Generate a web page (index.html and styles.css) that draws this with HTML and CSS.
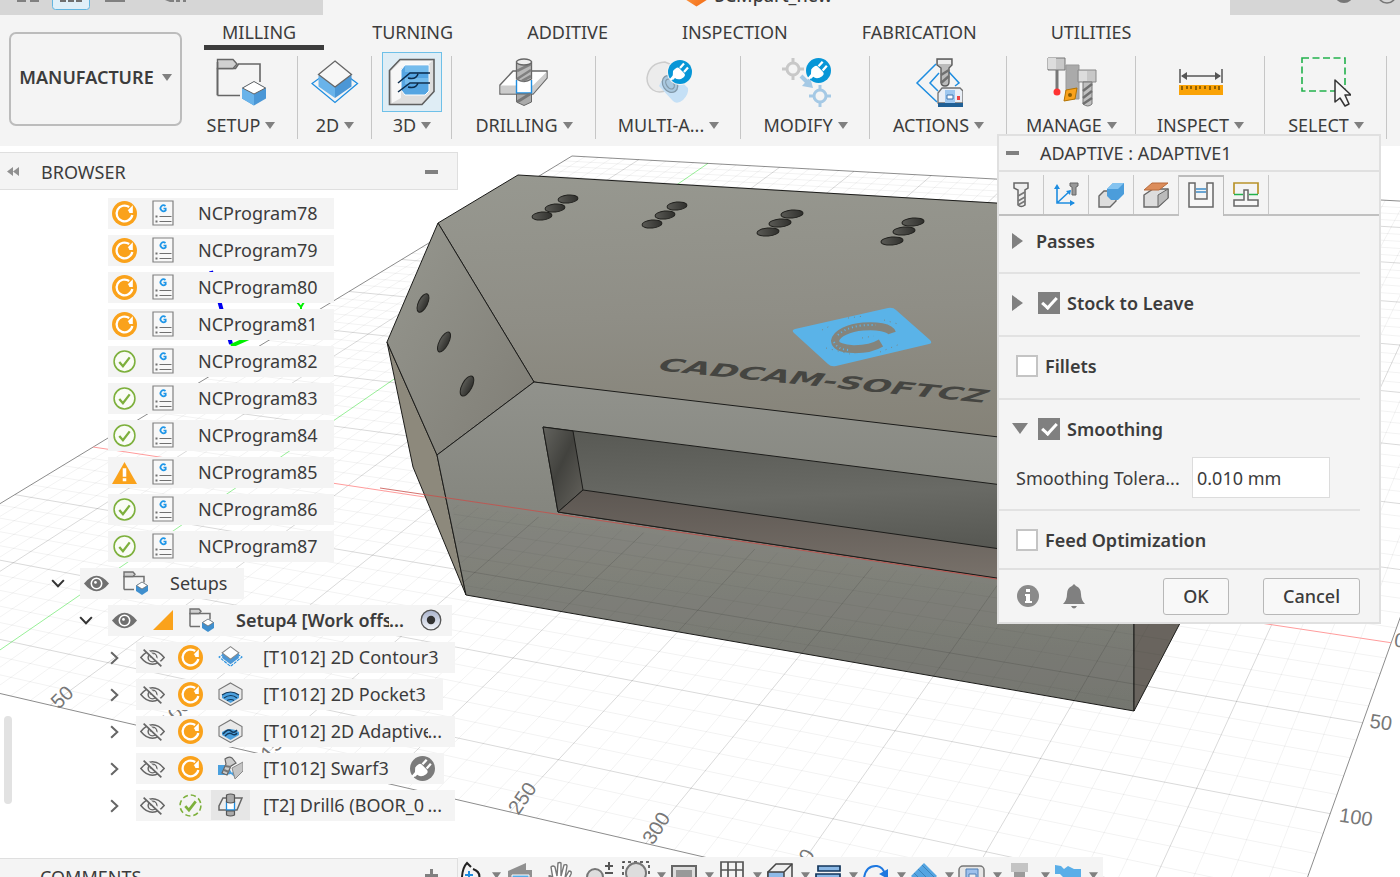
FILE: index.html
```html
<!DOCTYPE html>
<html lang="en">
<head>
<meta charset="utf-8">
<title>SCMpart_new</title>
<link rel="stylesheet" href="styles.css">
</head>
<body>
<svg class="defs" aria-hidden="true">
  <defs>
    <linearGradient id="g-top" x1="0" y1="0" x2="0.12" y2="1"><stop offset="0" stop-color="#979890"/><stop offset=".5" stop-color="#8f8e86"/><stop offset="1" stop-color="#848176"/></linearGradient>
    <linearGradient id="g-front" x1="0" y1="0" x2="0" y2="1"><stop offset="0" stop-color="#91928c"/><stop offset=".35" stop-color="#868780"/><stop offset="1" stop-color="#757670"/></linearGradient>
    <linearGradient id="g-chamfer" x1="0" y1="0" x2="1" y2="1"><stop offset="0" stop-color="#96978f"/><stop offset="1" stop-color="#7f7d75"/></linearGradient>
    <linearGradient id="g-wall" x1="0" y1="0" x2="1" y2="1"><stop offset="0" stop-color="#63635e"/><stop offset=".45" stop-color="#42423e"/><stop offset="1" stop-color="#66645e"/></linearGradient>
    <linearGradient id="g-pocket" x1="0" y1="0" x2=".15" y2="1"><stop offset="0" stop-color="#575853"/><stop offset=".5" stop-color="#696a65"/><stop offset="1" stop-color="#50514c"/></linearGradient>
    <linearGradient id="g-floor" x1="0" y1="0" x2=".1" y2="1"><stop offset="0" stop-color="#5d5752"/><stop offset="1" stop-color="#78716a"/></linearGradient>
    <linearGradient id="g-hole" x1="0" y1="0" x2="1" y2="0"><stop offset="0" stop-color="#5b5b56"/><stop offset="1" stop-color="#30302d"/></linearGradient>
    <linearGradient id="g-radio" x1="0" y1="0" x2="0" y2="1"><stop offset="0" stop-color="#a9b3cc"/><stop offset="1" stop-color="#f4f6fa"/></linearGradient>
    <linearGradient id="g-orange" x1="0" y1="0" x2="1" y2="1"><stop offset="0" stop-color="#ffa24d"/><stop offset="1" stop-color="#f26a13"/></linearGradient>
  </defs>
  <symbol id="i-caret" viewBox="0 0 10 7"><path d="M0 0h10L5 7z" fill="#808080"/></symbol>
  <symbol id="i-minus" viewBox="0 0 13 4"><path d="M0 0h13v4H0z" fill="#808080"/></symbol>
  <symbol id="i-plug" viewBox="0 0 24 24"><circle cx="12" cy="12" r="12" fill="currentColor"/><path d="M5 11q4-5 6-3l5 5q3 3-3 6-4 1-6-1l-2.500 2.500" fill="#fff"/><path d="M12 8l4-4.500M16 12l4-4.500" stroke="#fff" stroke-width="2.200"/><path d="M6 16l-3.500 4" stroke="#fff" stroke-width="2.500"/></symbol>
  <symbol id="i-refresh" viewBox="0 0 24 24"><circle cx="12" cy="12" r="12" fill="#faa21b"/><path d="M16.500 5.800A7.600 7.600 0 1 0 19.500 13.500" fill="none" stroke="#fff" stroke-width="2.200"/><path d="M20 4v7.500h-7.500z" fill="#fff"/><circle cx="12" cy="12.500" r="4.800" fill="#faa21b"/></symbol>
  <symbol id="i-ok" viewBox="0 0 24 24"><circle cx="12" cy="12" r="10" fill="#fafcf6" stroke="#7db03c" stroke-width="1.500"/><path d="M7 12.500l3.500 4L17 8" fill="none" stroke="#7db03c" stroke-width="2.200"/></symbol>
  <symbol id="i-okdash" viewBox="0 0 24 24"><circle cx="12" cy="12" r="10" fill="none" stroke="#7db03c" stroke-width="1.500" stroke-dasharray="5 2.850"/><path d="M7 12.500l3.500 4L17 8" fill="none" stroke="#7db03c" stroke-width="2.600"/></symbol>
  <symbol id="i-warn" viewBox="0 0 24 24"><path d="M12 2l12 21H0z" fill="#faa21b"/><path d="M10.300 8h3.400v8h-3.400zM10.300 17.500h3.400v3h-3.400z" fill="#fff"/></symbol>
  <symbol id="i-nc" viewBox="0 0 22 26"><path d="M1 1h20v24H1z" fill="#f8f8f8" stroke="#808080" stroke-width="1.200"/><path d="M13.500 6a3 3 0 1 0 .2 4.300V8.500h-2.200" fill="none" stroke="#1e96e8" stroke-width="1.700"/><path d="M7.500 16.500h12M7.500 21.500h12" stroke="#707070" stroke-width="1.200"/><path d="M3.500 15.500h2v2h-2zM3.500 20.500h2v2h-2z" fill="#707070"/></symbol>
  <symbol id="i-eye" viewBox="0 0 24 24"><path d="M0 12Q6 4.500 12 4.500T24 12Q18 19.500 12 19.500T0 12z" fill="#707070"/><circle cx="12" cy="12" r="5" fill="#707070" stroke="#fff" stroke-width="1.500"/><circle cx="11" cy="11" r="1.300" fill="#fff"/></symbol>
  <symbol id="i-eyeoff" viewBox="0 0 24 24"><g fill="none" stroke="#666" stroke-width="1.400"><path d="M.8 12Q6 5.500 12 5.500T23.200 12Q18 18.500 12 18.500T.8 12z"/><circle cx="12" cy="12" r="4.200"/><path d="M10 12a2 2 0 0 1 3-2"/><path d="M4.500 3.500l17 16" stroke="#f4f4f4" stroke-width="3"/><path d="M3.500 4.500l17 16" stroke-width="1.700"/></g></symbol>
  <symbol id="i-down" viewBox="0 0 12 8"><path d="M.8 1L6 6.500 11.200 1" fill="none" stroke="#333" stroke-width="1.800"/></symbol>
  <symbol id="i-right" viewBox="0 0 8 12"><path d="M1 .8L6.500 6 1 11.200" fill="none" stroke="#666" stroke-width="1.800"/></symbol>
  <symbol id="i-folder" viewBox="0 0 50 48"><path d="M1.500 37.500V10.500h18l3-4.500h21.500v18M24 37.500H1.500" fill="none" stroke="#666" stroke-width="1.600"/><path d="M1.500 1.500H17l4 4.500-4 4.500H1.500z" fill="#d0d0d0" stroke="#666" stroke-width="1.400"/><path d="M1.500 4v33" stroke="#666" stroke-width="1.600"/><path d="M38 23.500l12 6.500v10.500L38 47.500l-12-7V30z" fill="#4b97d6"/><path d="M26 30v10.500l12 7V36.500z" fill="#69b3ea"/><path d="M38 23.500l11.500 6.500L38 36 26.500 30z" fill="#fff" stroke="#666"/></symbol>
  <symbol id="i-folder-sm" viewBox="0 0 25 24"><path d="M1 18.500V5.500h20v6M11 18.500H1" fill="none" stroke="#707070" stroke-width="1.500"/><path d="M1 1h9l2 2.300-2 2.200H1z" fill="#d0d0d0" stroke="#707070" stroke-width="1.400"/><path d="M19 11l6 3.500v5.500l-6 4-6-4v-5.500z" fill="#3f8fce"/><path d="M19 11l5.500 3.500L19 18l-5.500-3.500z" fill="#fff" stroke="#707070" stroke-width=".8"/></symbol>
  <symbol id="i-2d" viewBox="0 0 48 44"><path d="M24 7L46.500 23.500 24 42.500 1 23.500z" fill="none" stroke="#1e8de0" stroke-width="1.300"/><path d="M7.500 15v11.500L24 38V26z" fill="#69b3ea"/><path d="M40.500 15v11.500L24 38V26z" fill="#4b97d6"/><path d="M24 1l16.500 13.500L24 27 7.500 14.500z" fill="#f7f7f7" stroke="#666" stroke-width="1.300"/></symbol>
  <symbol id="i-3d" viewBox="0 0 48 48"><path d="M12 1.500h34v32L34 46.500H1.500V12.500z" fill="#ddd" stroke="#5f5f5f" stroke-width="1.600"/><path d="M3 13L13 3h31l-7 7H13v30L4 45z" fill="#f7f7f7"/><path d="M17 7h24v26l-4 4H17l-4-5V12z" fill="#55a5e2" stroke="#fff"/><path d="M17 8h23v6H17zM17 20h23v6H17z" fill="#75bced"/><g fill="none" stroke="#0c2c4c" stroke-width="1.500"><path d="M42 15H22L10 25M42 25H22L10 34M20 20q8 2 10-4M20 29q8 2 10-4"/></g></symbol>
  <symbol id="i-drill" viewBox="0 0 50 48"><path d="M14 13h34v7L34 36H1V27z" fill="#fff" stroke="#6a6a6a" stroke-width="1.500"/><path d="M1.500 27.500H34L47.500 14v6L34 35.500H1.500z" fill="#ccc"/><path d="M17.500 22v13h15V22" fill="#fff" stroke="#1e8de0" stroke-width="1.400"/><path d="M17.500 36h15v8L25 47.500 17.500 44z" fill="#aaa" stroke="#666"/><path d="M18 44l13-8" stroke="#777" stroke-width="3"/><path d="M17.500 4v17q7.500 5 15 0V4z" fill="#b8b8b8" stroke="#666" stroke-width="1.300"/><path d="M18 13L32 6M18 21l14-9M23 23l9-5" stroke="#808080" stroke-width="2.600"/><ellipse cx="25" cy="4" rx="7.500" ry="3" fill="#eee" stroke="#666" stroke-width="1.300"/></symbol>
  <symbol id="i-multi" viewBox="0 0 48 48"><path d="M2 20Q4 5 20 4l12 5L22 32Q14 36 8 32 2 28 2 20z" fill="#ececec" stroke="#ccc" stroke-width="1.500"/><path d="M14 28L28 43Q32 47 38 42 44 36 43 30L28 16Q18 17 14 28z" fill="#c5e0f6"/><ellipse cx="25" cy="26" rx="7" ry="9" transform="rotate(-35 25 26)" fill="#a9c8df" stroke="#8299aa" stroke-width="1.300"/><ellipse cx="25" cy="26" rx="3.500" ry="5.500" transform="rotate(-35 25 26)" fill="none" stroke="#8299aa" stroke-width="1.300"/><circle cx="35" cy="14" r="13" fill="#f4f4f4"/><use href="#i-plug" x="23" y="2" width="24" height="24" color="#0696d7"/></symbol>
  <symbol id="i-modify" viewBox="0 0 50 50"><g fill="none" stroke-width="3"><path d="M12 1v6M12 17v6M1 12h6M17 12h6" stroke="#c8c8c8"/><circle cx="12" cy="12" r="6" stroke="#c8c8c8"/><path d="M39 28v6M39 44v6M28 39h6M44 39h6" stroke="#a5c9e5"/><circle cx="39" cy="39" r="6" stroke="#a5c9e5"/><path d="M20 19l9 9" stroke="#a5c9e5" stroke-width="4"/></g><path d="M32 31l-11-2 8-9z" fill="#a5c9e5"/><use href="#i-plug" x="25" y="1" width="25" height="25" color="#0696d7"/></symbol>
  <symbol id="i-actions" viewBox="0 0 48 50"><path d="M21 7L2 26l20 19M24 16L15 26l8 8M34 15l10 11-4 3" fill="none" stroke="#1e8de0" stroke-width="1.500"/><path d="M22 2h15v6l-3 3v14q0 4-4 4t-4-4V11l-4-3z" fill="#bbb" stroke="#5c5c5c" stroke-width="1.400"/><path d="M23 3h13v4H23z" fill="#eee"/><path d="M26 18l8-5M26 26l8-7" stroke="#707070" stroke-width="2.500"/><path d="M23 36l4-5h18l3 3v12H23z" fill="#e8eef6" stroke="#707070" stroke-width="1.300"/><path d="M30 33h10v13H30z" fill="#9ec7ef"/><path d="M32 38h6v4h-6z" fill="#fff" stroke="#3f75ad"/><path d="M42 39h3v4h-3z" fill="#e44"/><path d="M23 46h25v4H23z" fill="#1f5f95"/></symbol>
  <symbol id="i-manage" viewBox="0 0 50 50"><path d="M19 8h13v34H19z" fill="#aaa" stroke="#999"/><path d="M1 1h17v12H1z" fill="#c8c8c8" stroke="#777"/><path d="M1 1h8v11H1z" fill="#ddd"/><path d="M10 13v19" stroke="#777" stroke-width="3"/><circle cx="10" cy="35" r="3.500" fill="#f33"/><path d="M19 33l11-2-2 11-11 2z" fill="#faa21b" stroke="#b37300"/><circle cx="23" cy="38" r="2" fill="#8a5c00"/><path d="M31 13h18v12H31z" fill="#c8c8c8" stroke="#888"/><path d="M32 14h8v10h-8z" fill="#ddd"/><path d="M36 25h9v22q-4 4-9 0z" fill="#c0c0c0" stroke="#777"/><path d="M36 34l9-7M36 41l9-7M36 47l9-6" stroke="#707070" stroke-width="2.500"/></symbol>
  <symbol id="i-inspect" viewBox="0 0 44 26"><path d="M1 0v14M43 0v14M3 7h38" stroke="#555" stroke-width="1.500"/><path d="M2 7l6-4v8zM42 7l-6-4v8z" fill="#555"/><path d="M0 16h44v10H0z" fill="#faa307"/><path d="M3 17v4M8 17v3M12 17v3M17 17v4M21 17v3M26 17v3M31 17v4M36 17v3M40 17v4" stroke="#5c3f00" stroke-width="1.300"/></symbol>
  <symbol id="i-select" viewBox="0 0 50 50"><path d="M1 1h43v33H1z" fill="none" stroke="#22b14c" stroke-width="1.600" stroke-dasharray="7 3.500"/><path d="M34 23v22l5-4 5 8 4-2-4-9h6z" fill="#f7f7f7" stroke="#333" stroke-width="1.500" stroke-linejoin="round"/></symbol>
  <symbol id="i-part" viewBox="0 0 24 24"><path d="M12 0l11 6v11l-11 7-11-7V6z" fill="url(#g-orange)"/></symbol>
  <symbol id="d-tool" viewBox="0 0 26 26"><path d="M6 1h14v5l-3 2v15q-4 3-7 0V8L6 6z" fill="#eee" stroke="#666" stroke-width="1.500"/><path d="M10 14l7-4M10 19l7-4M10 23l7-4" stroke="#777" stroke-width="1.700"/></symbol>
  <symbol id="d-geom" viewBox="0 0 26 26"><path d="M4 5v16h17M4 21L17 9" fill="none" stroke="#1e8de0" stroke-width="1.600"/><path d="M4 2L1 7h6zM22 21l-5-3v6zM18 8l-5 1 4 4z" fill="#1e8de0"/><path d="M17 1h8v3l-2 1v8h-4V5l-2-1z" fill="#999" stroke="#666"/></symbol>
  <symbol id="d-stock" viewBox="0 0 26 26"><path d="M1 14l5-5h12v10l-6 6H1z" fill="#ddd" stroke="#666" stroke-width="1.400"/><path d="M9 7l6-6h11v11l-6 6h-7l-4-4z" fill="#4b9ddb"/><path d="M9 7l6-6h11l-6 6z" fill="#84c3f0"/></symbol>
  <symbol id="d-heights" viewBox="0 0 26 26"><path d="M1 13l9-6h15v9l-10 9H1z" fill="#ddd" stroke="#666" stroke-width="1.400"/><path d="M15 13v12L25 16V7z" fill="#bbb" stroke="#666"/><path d="M1 8l8-7h16l-9 7z" fill="#dc8d5b" stroke="#b86b3c"/></symbol>
  <symbol id="d-pass" viewBox="0 0 26 26"><path d="M1 1h6v16h12V1h6v24H1z" fill="#f8f8f8" stroke="#666" stroke-width="1.500"/><path d="M8 7h10M8 10h10" stroke="#3b8bc8" stroke-width="1.400"/></symbol>
  <symbol id="d-link" viewBox="0 0 26 26"><path d="M1 12V1h24v11" fill="none" stroke="#b8932b" stroke-width="1.700"/><path d="M1 12.500h9M16 12.500h9" stroke="#22b14c" stroke-width="1.600"/><path d="M11 8h4v10h10v6H1v-6h10z" fill="#f8f8f8" stroke="#666" stroke-width="1.500"/></symbol>
  <symbol id="i-info" viewBox="0 0 22 22"><circle cx="11" cy="11" r="11" fill="#8a8a8a"/><path d="M9 4h4v3H9zM8 9h5v7h2v2H8v-2h1v-5H8z" fill="#fff"/></symbol>
  <symbol id="i-bell" viewBox="0 0 22 25"><path d="M11 0l2 2q5 2 5 8 0 6 4 10H0q4-4 4-10 0-6 5-8zM8 22h6q-3 5-6 0z" fill="#808080"/></symbol>
  <symbol id="s-contour" viewBox="0 0 24 22"><path d="M12 4l11 7-11 9L1 11z" fill="none" stroke="#1e8de0" stroke-dasharray="3 1"/><path d="M4 7v5l8 6 8-6V7l-8 6z" fill="#4b97d6"/><path d="M12 1l8 6-8 6-8-6z" fill="#fff" stroke="#888"/></symbol>
  <symbol id="s-pocket" viewBox="0 0 25 24"><path d="M12.500 1L24 7.500V17l-11.500 6.500L1 17V7.500z" fill="#e9e9e9" stroke="#777" stroke-width="1.100"/><path d="M4 13q8-6 17 0v3l-8.500 5L4 16z" fill="#4ba0de"/><path d="M4 13q8.500-6 17 0M6 16q7-5 13 0M9 18.500q4-2 7 0" fill="none" stroke="#133a5c" stroke-width="1.200"/></symbol>
  <symbol id="s-adaptive" viewBox="0 0 25 24"><path d="M12.500 1L24 7.500V17l-11.500 6.500L1 17V7.500z" fill="#e9e9e9" stroke="#777" stroke-width="1.100"/><path d="M4 13q8-6 17 0v3l-8.500 5L4 16z" fill="#4ba0de"/><path d="M5 15q5-6 8-3t6-1M7 17q4-4 7-2t5-1" fill="none" stroke="#133a5c" stroke-width="1.500"/></symbol>
  <symbol id="s-swarf" viewBox="0 0 25 24"><path d="M0 9h9l5 8 4-6v11l-5-4-5 1H0z" fill="#4ba0de"/><path d="M14 12l11-6v9l-8 8z" fill="#c4c4c4" stroke="#888"/><path d="M7 3q4-3 7-1l4 5-5 3-4 9-5-2 4-9z" fill="#ccc" stroke="#666" stroke-width="1.200"/><path d="M7 10l6 1M6 14l5 2" stroke="#777" stroke-width="2"/></symbol>
  <symbol id="s-drill" viewBox="0 0 25 24"><path d="M5 5h19l-5 12H1v-4z" fill="#eee" stroke="#666" stroke-width="1.500"/><path d="M8.500 8v9h8V8" fill="#fff" stroke="#1e8de0" stroke-width="1.300"/><path d="M8.500 2q4-2 8 0v7q-4 2-8 0zM8.500 18h8v4q-4 2-8 0z" fill="#aaa" stroke="#555" stroke-width="1.200"/></symbol>
</svg>

<div class="app">
  <header class="titlebar">
    <div class="quick">
      <svg class="tiny" viewBox="0 0 200 15"><path d="M17 0h9v2h-9zM30 0h9v2h-9zM105 0h20v2h-20zM170 0h4v2h-4zM176 0h4v2h-4zM183 0h3v2h-3zM165 0l5 2v-2z" fill="#808080"/><rect x="52.500" y="-9" width="37" height="18.500" rx="3" fill="#e0eff8" stroke="#62b5e0"/><path d="M60 0h6v2h-6zM68 0h6v2h-6zM76 0h6v2h-6z" fill="#707070"/></svg>
    </div>
    <div class="doc"><svg width="24" height="24"><use href="#i-part"/></svg><span>SCMpart_new</span></div>
    <div class="right"><svg viewBox="0 0 170 15" width="170" height="15"><ellipse cx="114" cy="-5" rx="9" ry="8" fill="#777"/><circle cx="157" cy="-6" r="9" fill="none" stroke="#777" stroke-width="1.500"/></svg></div>
  </header>

  <section class="ribbon">
    <button class="workspace" type="button">MANUFACTURE <svg class="caret"><use href="#i-caret"/></svg></button>
    <div class="ribbon-main">
      <nav class="tabs">
        <a class="tab on" href="#">MILLING</a><a class="tab" href="#">TURNING</a><a class="tab" href="#">ADDITIVE</a><a class="tab" href="#">INSPECTION</a><a class="tab" href="#">FABRICATION</a><a class="tab" href="#">UTILITIES</a>
      </nav>
      <div class="groups">
        <button class="group" type="button"><span class="ico"><svg width="50" height="48"><use href="#i-folder"/></svg></span><span class="lab">SETUP <svg class="caret"><use href="#i-caret"/></svg></span></button>
        <button class="group" type="button"><span class="ico"><svg width="48" height="44"><use href="#i-2d"/></svg></span><span class="lab">2D <svg class="caret"><use href="#i-caret"/></svg></span></button>
        <button class="group" type="button"><span class="ico hot"><svg width="48" height="48"><use href="#i-3d"/></svg></span><span class="lab">3D <svg class="caret"><use href="#i-caret"/></svg></span></button>
        <button class="group" type="button"><span class="ico"><svg width="50" height="48"><use href="#i-drill"/></svg></span><span class="lab">DRILLING <svg class="caret"><use href="#i-caret"/></svg></span></button>
        <button class="group" type="button"><span class="ico"><svg width="48" height="48"><use href="#i-multi"/></svg></span><span class="lab">MULTI-A... <svg class="caret"><use href="#i-caret"/></svg></span></button>
        <button class="group" type="button"><span class="ico"><svg width="50" height="50"><use href="#i-modify"/></svg></span><span class="lab">MODIFY <svg class="caret"><use href="#i-caret"/></svg></span></button>
        <button class="group" type="button"><span class="ico"><svg width="48" height="50"><use href="#i-actions"/></svg></span><span class="lab">ACTIONS <svg class="caret"><use href="#i-caret"/></svg></span></button>
        <button class="group" type="button"><span class="ico"><svg width="50" height="50"><use href="#i-manage"/></svg></span><span class="lab">MANAGE <svg class="caret"><use href="#i-caret"/></svg></span></button>
        <button class="group" type="button"><span class="ico"><svg width="44" height="26"><use href="#i-inspect"/></svg></span><span class="lab">INSPECT <svg class="caret"><use href="#i-caret"/></svg></span></button>
        <button class="group" type="button"><span class="ico"><svg width="50" height="50"><use href="#i-select"/></svg></span><span class="lab">SELECT <svg class="caret"><use href="#i-caret"/></svg></span></button>
      </div>
    </div>
  </section>

  <main class="stage">
    <svg class="canvas" viewBox="0 146 1400 731" preserveAspectRatio="xMidYMid slice">
      <defs>
        <clipPath id="under-axis"><path d="M452 504L1182 613 1134 711 466 595z"/></clipPath>
      </defs>
      <g id="ground"></g>
      <g class="axis-labels">
        <text transform="translate(1381 722) rotate(8)" y="7">50</text>
        <text transform="translate(1356 817) rotate(8)" y="7">100</text>
        <text transform="translate(1400 640) rotate(8)" y="7">0</text>
        <text transform="translate(62 697) rotate(-44)" y="7">50</text>
        <text transform="translate(175 713) rotate(-46)" y="7">100</text>
        <text transform="translate(275 744) rotate(-50)" y="7">150</text>
        <text transform="translate(522 798) rotate(-55)" y="7">250</text>
        <text transform="translate(656 828) rotate(-58)" y="7">300</text>
        <text transform="translate(801 865) rotate(-60)" y="7">350</text>
      </g>
      <path d="M211 271l20 73" stroke="#0000f0" stroke-width="4"/>
      <path d="M231 346l29-13" stroke="#00f000" stroke-width="4"/>
      <path d="M297 302l4 5 3-5M301 307v4" stroke="#00f000" stroke-width="2" fill="none"/>

      <g stroke="#1c1c1a" stroke-width="1" stroke-linejoin="round">
        <path d="M387 342L437 455 466 595 413 467z" fill="#8d897c"/>
        <path d="M518 175L1200 215 1330 400 1182 470 534 382 438 223z" fill="url(#g-top)"/>
        <path d="M438 223L534 382 437 455 387 342z" fill="url(#g-chamfer)"/>
        <path d="M534 382L1134 453V711L466 595 437 455z" fill="url(#g-front)"/>
        <path d="M1134 453L1243 380V503L1134 711z" fill="#69655e"/>
        <path d="M543 427L1050 491V586L558 512z" fill="url(#g-pocket)"/>
        <path d="M543 427L573 431 583 490 558 512z" fill="url(#g-wall)"/>
        <path d="M583 490L1050 556V586L558 512z" fill="url(#g-floor)"/>
      </g>
      <use href="#ground" clip-path="url(#under-axis)" opacity=".8"/>
      <path d="M380 488L1010 581" stroke="#c94f4a" stroke-width="1" opacity=".8"/>

      <g fill="url(#g-hole)" stroke="#22221f" stroke-width="1">
        <ellipse cx="568" cy="199" rx="10" ry="4" transform="rotate(-6 568 199)"/><ellipse cx="555" cy="208" rx="10" ry="4" transform="rotate(-6 555 208)"/><ellipse cx="542" cy="216" rx="10" ry="4" transform="rotate(-6 542 216)"/>
        <ellipse cx="677" cy="206" rx="10" ry="4" transform="rotate(-6 677 206)"/><ellipse cx="665" cy="215" rx="10" ry="4" transform="rotate(-6 665 215)"/><ellipse cx="652" cy="224" rx="10" ry="4" transform="rotate(-6 652 224)"/>
        <ellipse cx="792" cy="214" rx="11" ry="4" transform="rotate(-5 792 214)"/><ellipse cx="780" cy="223" rx="11" ry="4" transform="rotate(-5 780 223)"/><ellipse cx="768" cy="232" rx="11" ry="4" transform="rotate(-5 768 232)"/>
        <ellipse cx="913" cy="222" rx="11" ry="4" transform="rotate(-5 913 222)"/><ellipse cx="904" cy="231" rx="11" ry="4" transform="rotate(-5 904 231)"/><ellipse cx="892" cy="241" rx="11" ry="4" transform="rotate(-5 892 241)"/>
        <ellipse cx="423" cy="303" rx="4.500" ry="10" transform="rotate(26 423 303)"/><ellipse cx="444" cy="342" rx="4.500" ry="11" transform="rotate(28 444 342)"/><ellipse cx="467" cy="386" rx="5" ry="11" transform="rotate(28 467 386)"/>
      </g>
      <path d="M795 329L888 308Q893 307 896 310L930 340Q933 343 929 344L836 366Q831 367 828 364L794 333Q791 330 795 329z" fill="#5ab3e8"/>
      <path d="M892 333C888 322 838 324 835 341C836 352 868 351 881 343" fill="none" stroke="#84847c" stroke-width="8"/>
      <path d="M838 335Q850 324 876 325M834 342Q838 350 850 350" fill="none" stroke="#5ab3e8" stroke-width="2" stroke-dasharray="1 3"/>
      <path d="M826 348l24 6M822 330l8-4M880 352l20-8M884 320l14 4M848 318l16-2M862 338l12-2" fill="none" stroke="#7b8583" stroke-width="1" stroke-dasharray="1 5"/>
      <text class="engraved" transform="matrix(1 .1 -.38 .5 655 370)">CADCAM-SOFTCZ</text>
    </svg>

    <aside class="left">
      <div class="panel-head"><svg width="12" height="9" viewBox="0 0 12 9"><path d="M6 0v9L0 4.500zM12 0v9L6 4.500z" fill="#909090"/></svg><span>BROWSER</span><svg class="end" width="13" height="4"><use href="#i-minus"/></svg></div>
      <ul class="tree">
        <li class="row nc"><div class="cell"><svg class="st"><use href="#i-refresh"/></svg><svg class="pg"><use href="#i-nc"/></svg><span>NCProgram78</span></div></li>
        <li class="row nc"><div class="cell"><svg class="st"><use href="#i-refresh"/></svg><svg class="pg"><use href="#i-nc"/></svg><span>NCProgram79</span></div></li>
        <li class="row nc"><div class="cell"><svg class="st"><use href="#i-refresh"/></svg><svg class="pg"><use href="#i-nc"/></svg><span>NCProgram80</span></div></li>
        <li class="row nc"><div class="cell"><svg class="st"><use href="#i-refresh"/></svg><svg class="pg"><use href="#i-nc"/></svg><span>NCProgram81</span></div></li>
        <li class="row nc"><div class="cell"><svg class="st"><use href="#i-ok"/></svg><svg class="pg"><use href="#i-nc"/></svg><span>NCProgram82</span></div></li>
        <li class="row nc"><div class="cell"><svg class="st"><use href="#i-ok"/></svg><svg class="pg"><use href="#i-nc"/></svg><span>NCProgram83</span></div></li>
        <li class="row nc"><div class="cell"><svg class="st"><use href="#i-ok"/></svg><svg class="pg"><use href="#i-nc"/></svg><span>NCProgram84</span></div></li>
        <li class="row nc"><div class="cell"><svg class="st"><use href="#i-warn"/></svg><svg class="pg"><use href="#i-nc"/></svg><span>NCProgram85</span></div></li>
        <li class="row nc"><div class="cell"><svg class="st"><use href="#i-ok"/></svg><svg class="pg"><use href="#i-nc"/></svg><span>NCProgram86</span></div></li>
        <li class="row nc"><div class="cell"><svg class="st"><use href="#i-ok"/></svg><svg class="pg"><use href="#i-nc"/></svg><span>NCProgram87</span></div></li>
        <li class="row setups"><svg class="tw"><use href="#i-down"/></svg><div class="cell"><svg class="st"><use href="#i-eye"/></svg><svg class="fo"><use href="#i-folder-sm"/></svg><span>Setups</span></div></li>
        <li class="row setup"><svg class="tw"><use href="#i-down"/></svg><div class="cell wide"><svg class="st"><use href="#i-eye"/></svg><svg class="tri" viewBox="0 0 20 20"><path d="M20 0v20H0z" fill="#faa21b"/></svg><svg class="fo"><use href="#i-folder-sm"/></svg><b class="clip"><span>Setup4 [Work offs</span><i>...</i></b><svg class="radio" viewBox="0 0 22 22"><circle cx="11" cy="11" r="9.800" fill="url(#g-radio)" stroke="#555" stroke-width="1.300"/><circle cx="11" cy="11" r="4.200" fill="#333"/></svg></div></li>
        <li class="row op"><svg class="tr"><use href="#i-right"/></svg><div class="cell"><svg class="st"><use href="#i-eyeoff"/></svg><svg class="st"><use href="#i-refresh"/></svg><i class="kind"><svg><use href="#s-contour"/></svg></i><span>[T1012] 2D Contour3</span></div></li>
        <li class="row op"><svg class="tr"><use href="#i-right"/></svg><div class="cell"><svg class="st"><use href="#i-eyeoff"/></svg><svg class="st"><use href="#i-refresh"/></svg><i class="kind"><svg><use href="#s-pocket"/></svg></i><span>[T1012] 2D Pocket3</span></div></li>
        <li class="row op"><svg class="tr"><use href="#i-right"/></svg><div class="cell wide"><svg class="st"><use href="#i-eyeoff"/></svg><svg class="st"><use href="#i-refresh"/></svg><i class="kind"><svg><use href="#s-adaptive"/></svg></i><span class="clip"><span>[T1012] 2D Adaptive</span><i>...</i></span></div></li>
        <li class="row op"><svg class="tr"><use href="#i-right"/></svg><div class="cell"><svg class="st"><use href="#i-eyeoff"/></svg><svg class="st"><use href="#i-refresh"/></svg><i class="kind"><svg><use href="#s-swarf"/></svg></i><span>[T1012] Swarf3</span><svg class="plug"><use href="#i-plug"/></svg></div></li>
        <li class="row op"><svg class="tr"><use href="#i-right"/></svg><div class="cell wide"><svg class="st"><use href="#i-eyeoff"/></svg><svg class="st"><use href="#i-okdash"/></svg><i class="kind picked"><svg><use href="#s-drill"/></svg></i><span class="clip"><span>[T2] Drill6 (BOOR_0</span><i>...</i></span></div></li>
      </ul>
      <div class="panel-head comments"><span>COMMENTS</span><svg class="end" width="13" height="13" viewBox="0 0 13 13"><path d="M5 0h3v5h5v3H8v5H5V8H0V5h5z" fill="#808080"/></svg></div>
      <div class="thumb"></div>
    </aside>

    <nav class="viewbar">
      <button type="button" aria-label="Orbit"><svg viewBox="0 0 28 28"><path d="M5 24Q4 8 10 2l4 4M16 8q8 3 6 10" fill="none" stroke="#222" stroke-width="2"/><path d="M8 14h8M12 10v8" stroke="#1e8de0" stroke-width="2"/></svg><svg class="caret"><use href="#i-caret"/></svg></button>
      <button type="button" aria-label="Look at"><svg viewBox="0 0 28 28"><path d="M2 10L20 2v7h6v17H2z" fill="#909090"/><path d="M6 14h17v10H6z" fill="#55aeea" stroke="#fff"/></svg></button>
      <button type="button" aria-label="Pan"><svg viewBox="0 0 28 28"><path d="M8 24L3 15q2-1 4 3L5 6q2-2 4 0l2 9 1-13q2-1 3 0v13l3-11q3-1 3 1l-2 12 4-7q3 0 2 3l-6 12" fill="#fff" stroke="#777" stroke-width="1.400"/></svg></button>
      <button type="button" aria-label="Zoom"><svg viewBox="0 0 28 28"><circle cx="9" cy="16" r="8" fill="#ddd" stroke="#777" stroke-width="2"/><path d="M19 5h8M23 1v8M19 12h8" stroke="#555" stroke-width="2"/></svg></button>
      <button type="button" aria-label="Fit"><svg viewBox="0 0 28 28"><path d="M1 14V1h26v13" fill="none" stroke="#333" stroke-width="1.500" stroke-dasharray="3 3"/><circle cx="14" cy="12" r="10" fill="#ddd" stroke="#777" stroke-width="2"/></svg><svg class="caret"><use href="#i-caret"/></svg></button>
      <button type="button" aria-label="Display"><svg viewBox="0 0 28 28"><path d="M2 5h24v20H2z" fill="#ddd" stroke="#666" stroke-width="2"/><path d="M6 9h16v14H6z" fill="#999"/></svg><svg class="caret"><use href="#i-caret"/></svg></button>
      <button type="button" aria-label="Grid"><svg viewBox="0 0 28 28"><path d="M3 1h22v24H3zM10 1v24M18 1v24M3 9h22M3 17h22" fill="none" stroke="#555" stroke-width="1.700"/></svg><svg class="caret"><use href="#i-caret"/></svg></button>
      <button type="button" aria-label="View cube"><svg viewBox="0 0 28 28"><path d="M2 11L10 3h16v14l-8 8H2z" fill="#eee" stroke="#444" stroke-width="1.500"/><path d="M2 11h16v14H2zM18 11l8-8" fill="#8fbbe8" stroke="#444" stroke-width="1.500"/></svg><svg class="caret"><use href="#i-caret"/></svg></button>
      <button type="button" aria-label="Layers"><svg viewBox="0 0 28 28"><path d="M4 5h22v5H4zM2 13h24v4H2zM4 20h22v5H4z" fill="#8ab8e6" stroke="#12355b" stroke-width="1.700"/></svg><svg class="caret"><use href="#i-caret"/></svg></button>
      <button type="button" aria-label="Refresh"><svg viewBox="0 0 28 28"><path d="M2 17Q4 4 15 5q6 1 8 8" fill="none" stroke="#1e78e0" stroke-width="2"/><path d="M17 13l9 5V8z" fill="#1e78e0"/></svg><svg class="caret"><use href="#i-caret"/></svg></button>
      <button type="button" aria-label="Stock"><svg viewBox="0 0 28 28"><path d="M14 2l13 13-13 13L1 15z" fill="#55a5e2"/><path d="M4 12l13 13M8 8l13 13M12 4l13 13" stroke="#3c84bc"/></svg><svg class="caret"><use href="#i-caret"/></svg></button>
      <button type="button" aria-label="Machine"><svg viewBox="0 0 28 28"><rect x="1" y="5" width="25" height="22" rx="4" fill="#e6e6e6" stroke="#777" stroke-width="1.500"/><path d="M8 8h12v18H8z" fill="#9ec1ec" stroke="#4f7fb5"/><path d="M11 13h7v8h-7z" fill="#eee" stroke="#4f7fb5"/></svg><svg class="caret"><use href="#i-caret"/></svg></button>
      <button type="button" aria-label="Tool"><svg viewBox="0 0 28 28"><path d="M5 2h17v9H5z" fill="#c4c4c4"/><path d="M8 11h11v5H8zM10 16h7v12h-7z" fill="#9a9a9a"/></svg><svg class="caret"><use href="#i-caret"/></svg></button>
      <button type="button" aria-label="Toolpath"><svg viewBox="0 0 28 28"><path d="M1 4l6 1 3 3 4-3 6 3h7v18h-7V16H9l-3-3H1z" fill="#5aaee8"/></svg><svg class="caret"><use href="#i-caret"/></svg></button>
    </nav>
  </main>

  <section class="dialog" aria-label="Adaptive">
    <header class="dlg-head"><svg width="13" height="4"><use href="#i-minus"/></svg><span>ADAPTIVE : ADAPTIVE1</span></header>
    <div class="dlg-tabs">
      <button type="button" aria-label="Tool"><svg><use href="#d-tool"/></svg></button><button type="button" aria-label="Geometry"><svg><use href="#d-geom"/></svg></button><button type="button" aria-label="Stock"><svg><use href="#d-stock"/></svg></button><button type="button" aria-label="Heights"><svg><use href="#d-heights"/></svg></button><button class="on" type="button" aria-label="Passes"><svg><use href="#d-pass"/></svg></button><button type="button" aria-label="Linking"><svg><use href="#d-link"/></svg></button>
    </div>
    <div class="dlg-body">
      <div class="opt first"><svg class="arr" viewBox="0 0 11 16"><path d="M0 0l11 8-11 8z" fill="#808080"/></svg><b>Passes</b></div>
      <div class="opt"><svg class="arr" viewBox="0 0 11 16"><path d="M0 0l11 8-11 8z" fill="#808080"/></svg><label><input type="checkbox" checked><b>Stock to Leave</b></label></div>
      <div class="opt"><label><input type="checkbox"><b>Fillets</b></label></div>
      <div class="opt open"><svg class="arr dn" viewBox="0 0 16 11"><path d="M0 0h16L8 11z" fill="#808080"/></svg><label><input type="checkbox" checked><b>Smoothing</b></label></div>
      <div class="field"><label for="tol">Smoothing Tolera...</label><input id="tol" type="text" value="0.010 mm"></div>
      <div class="opt last"><label><input type="checkbox"><b>Feed Optimization</b></label></div>
    </div>
    <footer class="dlg-foot"><svg width="22" height="22"><use href="#i-info"/></svg><svg width="22" height="25"><use href="#i-bell"/></svg><button class="ok" type="button">OK</button><button type="button">Cancel</button></footer>
  </section>
</div>
<script src="ground.js"></script>
</body>
</html>
```
FILE: styles.css
```css
* { box-sizing: border-box; }
body { margin: 0; background: #fff; color: #3c3c3c; font: 18px/24px "Noto Sans", "Open Sans", sans-serif; }
button { font: inherit; color: inherit; background: none; border: 0; padding: 0; }
ul { list-style: none; margin: 0; padding: 0; }
svg { display: block; flex: none; }
b { font-weight: 600; }
i { font-style: normal; }
.defs { position: absolute; width: 0; height: 0; }
.caret { width: 10px; height: 7px; }

.app { position: relative; height: 100vh; display: flex; flex-direction: column; overflow: hidden; }

.titlebar { display: flex; flex: none; height: 15px; background: #f4f4f4; overflow: hidden; }
.quick { width: 323px; background: #d6d6d6; }
.tiny { width: 200px; height: 15px; }
.doc { flex: 1; display: flex; justify-content: center; align-items: flex-end; gap: 7px; font-weight: 500; margin-right: 12px; padding: 0 24px 8px 0; }
.doc svg { width: 23px; height: 24px; }
.doc span { line-height: 24px; }
.right { width: 170px; background: #d6d6d6; }

.ribbon { display: flex; flex: none; height: 131px; padding-right: 13px; background: #f4f4f4; }
.workspace { flex: none; width: 173px; height: 94px; margin: 17px 22px 0 9px; padding-bottom: 4px; border: 2px solid #bcbcbc; border-radius: 7px; display: flex; align-items: center; justify-content: center; gap: 8px; font-weight: 600; }
.ribbon-main { flex: 1; }
.tabs { display: flex; height: 35px; }
.tab { position: relative; padding: 5px 37px 0; color: inherit; text-decoration: none; }
.tab.on { padding: 5px 39px 0 18px; }
.tab.on::after { content: ""; position: absolute; left: 0; bottom: 0; width: 120px; height: 5px; background: #3c3c3c; }
.groups { display: grid; grid-template-columns: 94fr 74fr 80fr 144fr 145fr 129fr 137fr 129fr 129fr 122fr; height: 83px; }
.group { position: relative; display: flex; flex-direction: column; align-items: center; white-space: nowrap; }
.group::after { content: ""; position: absolute; right: 0; top: 6px; bottom: -1px; width: 1px; background: #c6c6c6; }
.group:first-child { padding-right: 20px; }
.ico { display: flex; align-items: center; justify-content: center; width: 60px; height: 60px; margin-top: 2px; }
.ico.hot { background: #dfedf5; border: 1px solid #6ec0e8; }
.lab { display: flex; align-items: center; gap: 5px; height: 26px; }

.stage { position: relative; flex: 1; min-height: 0; display: grid; grid-template-columns: 458px 1fr; }
.canvas { position: absolute; inset: 0; width: 100%; height: 100%; }
.minor { stroke: #000; stroke-opacity: .05; }
.major { stroke: #000; stroke-opacity: .15; }
.rim { stroke: #000; stroke-opacity: .45; }
.axis-x { stroke: #ff9c9c; }
.axis-y { stroke: #98f098; }
.axis-labels { font: 20px "Liberation Sans", sans-serif; fill: #777; text-anchor: middle; }
.engraved { font: bold 34px "DejaVu Sans", sans-serif; fill: #454541; }

.left { position: relative; display: flex; flex-direction: column; padding-top: 6px; min-height: 0; }
.panel-head { display: flex; align-items: center; gap: 22px; flex: none; height: 38px; padding: 1px 19px 0 7px; background: #f4f4f4; border: 1px solid #dfdfdf; border-left: 0; }
.end { margin-left: auto; }
.comments { height: 19px; margin-top: auto; overflow: hidden; align-items: flex-start; padding: 6px 19px 0 40px; border-bottom: 0; }
.comments svg { margin-top: 4px; }
.tree { padding-top: 5px; }
.row { display: flex; align-items: center; height: 37px; }
.cell { display: flex; align-items: center; height: 31px; padding: 0 17px 1px 4px; background: #f4f4f4; white-space: nowrap; }
.nc { padding-left: 108px; }
.nc .cell { width: 226px; }
.st { width: 25px; height: 25px; }
.pg { width: 22px; height: 26px; margin: 0 24px 0 15px; }
.fo { width: 25px; height: 24px; margin: 0 22px 0 14px; }
.tw { width: 14px; height: 9px; margin-right: 15px; }
.tr { width: 9px; height: 14px; margin-right: 17px; }
.setups { padding-left: 51px; }
.setup { padding-left: 79px; }
.setup .cell { width: 344px; padding-right: 10px; }
.tri { width: 20px; height: 20px; margin-left: 16px; }
.setup .fo { margin-left: 16px; }
.radio { width: 22px; height: 22px; margin-left: 16px; }
.op { padding-left: 110px; }
.op .wide { width: 319px; padding-right: 13px; }
.op .st + .st { margin-left: 13px; }
.kind { display: flex; align-items: center; justify-content: center; width: 39px; height: 30px; margin: 0 13px 0 8px; }
.kind svg { width: 25px; height: 24px; }
.picked { background: #e6e6e6; }
.plug { width: 25px; height: 25px; margin: 0 -8px 0 21px; color: #7b7b7b; }
.clip { display: flex; flex: 1; min-width: 0; }
.clip span { flex: 1; min-width: 0; overflow: hidden; }
.thumb { position: absolute; left: 4px; top: 570px; width: 8px; height: 88px; border-radius: 4px; background: #e2e2e2; }

.viewbar { position: relative; align-self: end; justify-self: start; display: flex; height: 20px; padding: 4px 3px 0 0; background: #f4f4f4; overflow: hidden; }
.viewbar button { display: flex; align-items: center; justify-content: center; gap: 7px; width: 48px; height: 28px; }
.viewbar button:nth-child(1) { width: 42px; }
.viewbar button:nth-child(2), .viewbar button:nth-child(3), .viewbar button:nth-child(4) { width: 40px; }
.viewbar svg { width: 28px; height: 28px; }
.viewbar .caret { width: 9px; height: 7px; }

.dialog { position: absolute; top: 134px; right: 19px; width: 384px; background: #f4f4f4; border: 2px solid #e0e0e0; }
.dlg-head { display: flex; align-items: center; gap: 21px; height: 36px; padding-left: 7px; border-bottom: 2px solid #e0e0e0; }
.dlg-tabs { display: flex; height: 44px; padding-top: 3px; box-shadow: inset 0 -2px #c0c0c0; }
.dlg-tabs button { display: flex; align-items: center; justify-content: center; width: 45px; height: 39px; border-right: 1px solid #c8c8c8; }
.dlg-tabs .on { height: 41px; background: #f4f4f4; border: 1px solid #bbb; border-width: 2px 1px 0 0; padding-bottom: 3px; }
.dlg-tabs svg { width: 26px; height: 26px; }
.dlg-body { margin-right: 19px; }
.opt { display: flex; align-items: center; gap: 13px; height: 63px; padding: 0 0 3px 13px; border-bottom: 2px solid #e2e2e2; }
.opt.first { gap: 11px; height: 58px; padding-bottom: 7px; }
.opt.open { height: 57px; padding-bottom: 0; border: 0; }
.opt.last { height: 57px; padding-bottom: 0; border: 0; }
.opt > label:first-child { margin-left: 4px; }
.opt label { display: flex; align-items: center; gap: 7px; }
.arr { width: 11px; height: 16px; margin-right: 2px; }
.dn { width: 16px; height: 11px; margin-right: -3px; }
input[type=checkbox] { appearance: none; width: 22px; height: 22px; margin: 0; background: #fff; border: 2px solid #c4c4c4; }
input[type=checkbox]:checked { border-color: #808080; background: #808080; display: grid; place-items: center; }
input[type=checkbox]:checked::before { content: ""; width: 6px; height: 12px; border: solid #fff; border-width: 0 3px 3px 0; transform: rotate(42deg); margin-bottom: 4px; }
.field { display: flex; align-items: center; justify-content: space-between; height: 54px; padding: 0 30px 11px 17px; border-bottom: 2px solid #e2e2e2; }
.field label { white-space: nowrap; }
.field input { width: 138px; height: 41px; padding: 0 4px; border: 1px solid #dcdcdc; background: #fff; font: inherit; color: inherit; }
.dlg-foot { display: flex; align-items: center; height: 54px; padding: 0 19px 0 18px; border-top: 2px solid #e0e0e0; }
.dlg-foot svg + svg { margin-left: 24px; }
.dlg-foot button { width: 97px; height: 37px; border: 1px solid #b8b8b8; border-radius: 3px; background: #f8f8f8; font-weight: 500; }
.dlg-foot .ok { width: 66px; margin: 0 34px 0 auto; }
```
FILE: ground.js
```js
// Ground plane: a 10 mm grid projected onto the quad of its four corners.
const X0 = -100, X1 = 490, Y0 = -440, Y1 = 180;
const corners = [[572, 156], [1546, 209], [1268, 988], [-226, 641]];

function projector([p0, p1, p2, p3]) {
  const ax = p1[0] - p2[0], ay = p1[1] - p2[1];
  const bx = p3[0] - p2[0], by = p3[1] - p2[1];
  const sx = p0[0] - p1[0] + p2[0] - p3[0], sy = p0[1] - p1[1] + p2[1] - p3[1];
  const det = ax * by - bx * ay;
  const g = (sx * by - bx * sy) / det, h = (ax * sy - sx * ay) / det;
  const a = p1[0] - p0[0] + g * p1[0], b = p3[0] - p0[0] + h * p3[0];
  const d = p1[1] - p0[1] + g * p1[1], e = p3[1] - p0[1] + h * p3[1];
  return (x, y) => {
    const s = (x - X0) / (X1 - X0), t = (y - Y0) / (Y1 - Y0);
    const w = 1 + g * s + h * t;
    return [(a * s + b * t + p0[0]) / w, (d * s + e * t + p0[1]) / w];
  };
}

const project = projector(corners);
const ground = document.getElementById("ground");

function line(from, to, cls) {
  const el = document.createElementNS("http://www.w3.org/2000/svg", "line");
  const [x1, y1] = project(...from), [x2, y2] = project(...to);
  Object.entries({ x1, y1, x2, y2, class: cls }).forEach(([k, v]) => el.setAttribute(k, v));
  ground.append(el);
}
const kind = (v, lo, hi, axis) =>
  v === 0 ? axis : v === lo || v === hi ? "rim" : v % 50 === 0 ? "major" : "minor";

for (let x = X0; x <= X1; x += 10) line([x, Y0], [x, Y1], kind(x, X0, X1, "axis-y"));
for (let y = Y0; y <= Y1; y += 10) line([X0, y], [X1, y], kind(y, Y0, Y1, "axis-x"));
```
